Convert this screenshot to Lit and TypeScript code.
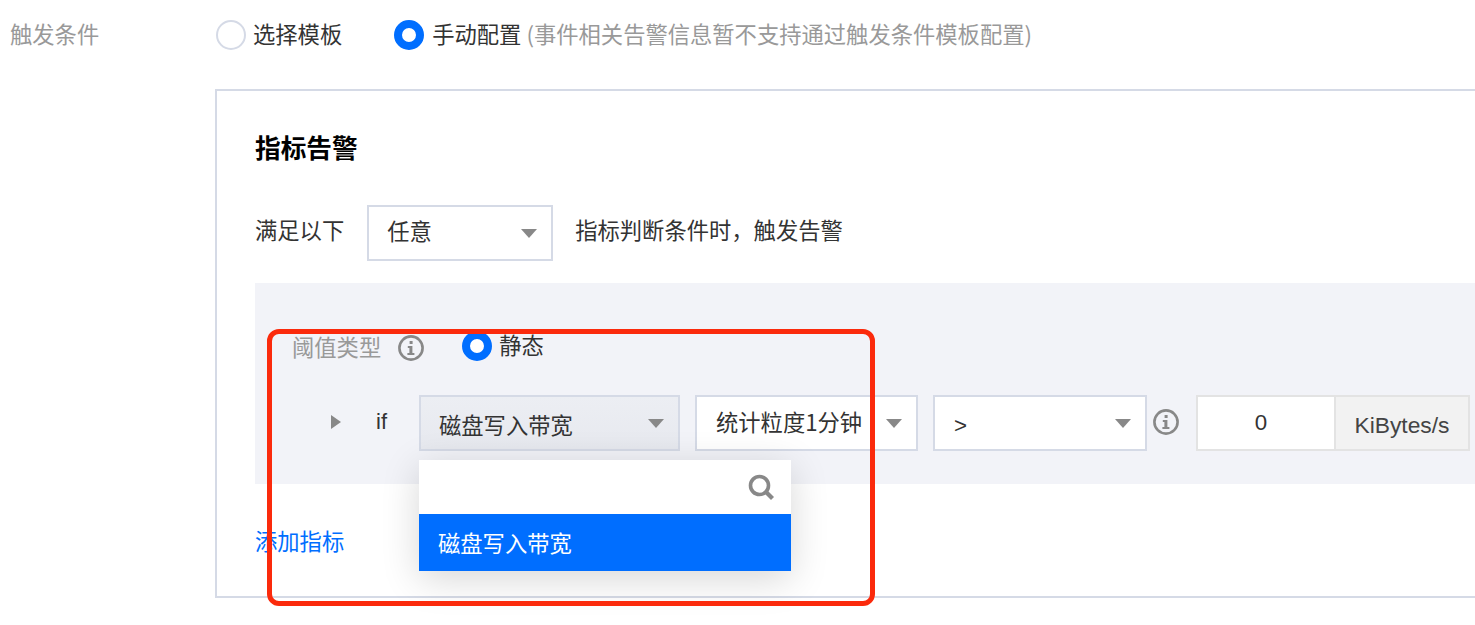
import { LitElement, html, css, svg } from 'lit';
import { customElement } from 'lit/decorators.js';

const infoIcon = svg`<svg class="info" viewBox="0 0 28 28" width="28" height="28">
  <circle cx="14" cy="14" r="11.6" fill="none" stroke="#888" stroke-width="2.6"/>
  <rect x="12.6" y="7" width="3" height="3" fill="#888"/>
  <path d="M10.8 12h4.6v7h2v2h-7v-2h2v-5h-1.600z" fill="#888"/>
</svg>`;

const searchIcon = svg`<svg viewBox="0 0 28 28" width="28" height="28">
  <circle cx="12.500" cy="12.500" r="9" fill="none" stroke="#888" stroke-width="3.600"/>
  <path d="M19 19l6.500 6.500" stroke="#888" stroke-width="4.200" fill="none"/>
</svg>`;

@customElement('app-root')
export class AppRoot extends LitElement {
  static styles = css`
    :host {
      display: block;
      position: relative;
      width: 1475px;
      height: 625px;
      overflow: hidden;
      background: #fff;
      color: #333;
      font-family: "Noto Sans CJK SC", "Liberation Sans", sans-serif;
      font-size: 22.300px;
      line-height: 30px;
    }
    .t {
      padding-bottom: 4px;
    }
    .top {
      display: flex;
      align-items: center;
      height: 30px;
      padding: 20px 0 0 10px;
    }
    .label {
      width: 206px;
      flex: none;
      color: #999;
    }
    .radio {
      box-sizing: border-box;
      width: 30px;
      height: 30px;
      flex: none;
      border-radius: 50%;
      border: 2px solid #d5dae6;
      background: #fff;
      margin-right: 7px;
    }
    .radio.on {
      border: 8px solid #006eff;
    }
    .second {
      margin: 0 8px 0 52px;
    }
    .hint {
      color: #999;
      margin-left: 5px;
    }
    .panel {
      box-sizing: border-box;
      width: 1400px;
      height: 509px;
      margin: 39px 0 0 215px;
      border: 2px solid #d5dae6;
      padding: 0 0 0 38px;
    }
    h2 {
      margin: 39px 0 0;
      font-size: 25.700px;
      line-height: 34px;
      font-weight: 700;
      color: #000;
    }
    .match {
      display: flex;
      align-items: center;
      height: 56px;
      margin-top: 41px;
    }
    .match > .t {
      padding-bottom: 8px;
    }
    .select {
      box-sizing: border-box;
      display: flex;
      align-items: center;
      justify-content: space-between;
      height: 56px;
      flex: none;
      border: 2px solid #d5dae6;
      background: #fff;
      padding: 0 14px 0 19px;
      white-space: nowrap;
    }
    .select span {
      padding-top: 2px;
    }
    .arrow {
      width: 0;
      height: 0;
      flex: none;
      border-left: 8px solid transparent;
      border-right: 8px solid transparent;
      border-top: 9px solid #888;
    }
    .any {
      width: 186px;
      margin: 0 22px 0 23px;
      padding-left: 18px;
    }
    .select.any span {
      padding: 0 0 6px;
    }
    .box {
      width: 1300px;
      height: 201px;
      margin-top: 22px;
      background: #f2f3f8;
      box-sizing: border-box;
      padding: 48px 0 0 38px;
    }
    .threshold {
      display: flex;
      align-items: center;
      height: 30px;
    }
    .threshold .name {
      color: #999;
      margin: 0 16px 0 -1px;
    }
    .threshold .info {
      margin: 4px 0 0;
    }
    .threshold .radio {
      margin: 0 7px 0 37px;
    }
    .rule {
      display: flex;
      align-items: center;
      height: 56px;
      margin-top: 34px;
    }
    .rule .info {
      margin-bottom: 2px;
    }
    .caret {
      width: 0;
      height: 0;
      flex: none;
      margin: 0 0 2px 38px;
      border-top: 7.500px solid transparent;
      border-bottom: 7.500px solid transparent;
      border-left: 10px solid #888;
    }
    .if {
      width: 43px;
      margin-left: 35px;
      padding-bottom: 2px;
      font-family: "Liberation Sans", sans-serif;
      font-size: 22px;
    }
    .metric {
      width: 261px;
      padding-left: 18px;
      background: linear-gradient(#eceef3, #e7e9ef);
      margin-right: 15px;
    }
    .period {
      width: 223px;
      margin-right: 15px;
    }
    .select.period span {
      padding: 0 0 4px;
    }
    .op {
      width: 214px;
      margin-right: 5px;
    }
    .select.op span {
      padding-top: 6px;
      font-family: "Liberation Sans", sans-serif;
    }
    .info {
      flex: none;
      margin-right: 16px;
    }
    .group {
      display: flex;
      height: 56px;
      box-sizing: border-box;
      border: 2px solid #e3e3e3;
      font-family: "Liberation Sans", sans-serif;
    }
    .value {
      box-sizing: border-box;
      width: 138px;
      padding-right: 10px;
      background: #fff;
      display: flex;
      align-items: center;
      justify-content: center;
      border-right: 2px solid #e3e3e3;
    }
    .unit {
      width: 132px;
      background: #f2f2f2;
      display: flex;
      align-items: center;
      justify-content: center;
      color: #444;
      font-size: 22.800px;
      padding-top: 4px;
      box-sizing: border-box;
    }
    .add {
      margin-top: 41px;
      color: #006eff;
    }
    .dropdown {
      position: absolute;
      left: 419px;
      top: 460px;
      width: 372px;
      background: #fff;
      box-shadow: 0 8px 36px rgba(0, 0, 0, 0.16);
    }
    .search {
      display: flex;
      justify-content: flex-end;
      align-items: center;
      height: 54px;
      padding-right: 16px;
    }
    .option {
      box-sizing: border-box;
      height: 57px;
      display: flex;
      align-items: center;
      padding: 0 0 2px 19px;
      background: #006eff;
      color: #fff;
    }
    .mark {
      position: absolute;
      left: 267px;
      top: 329px;
      width: 608px;
      height: 277px;
      box-sizing: border-box;
      border: 5px solid #fb2a0c;
      border-radius: 12px;
      pointer-events: none;
    }
  `;

  render() {
    return html`
      <div class="top">
        <div class="label t">触发条件</div>
        <div class="radio"></div>
        <div class="t">选择模板</div>
        <div class="radio on second"></div>
        <div class="t">手动配置</div>
        <div class="hint t">(事件相关告警信息暂不支持通过触发条件模板配置)</div>
      </div>
      <div class="panel">
        <h2>指标告警</h2>
        <div class="match">
          <div class="t">满足以下</div>
          <div class="select any"><span>任意</span><i class="arrow"></i></div>
          <div class="t">指标判断条件时&#xFF0C;触发告警</div>
        </div>
        <div class="box">
          <div class="threshold">
            <div class="name">阈值类型</div>
            ${infoIcon}
            <div class="radio on"></div>
            <div class="t">静态</div>
          </div>
          <div class="rule">
            <i class="caret"></i>
            <div class="if">if</div>
            <div class="select metric"><span>磁盘写入带宽</span><i class="arrow"></i></div>
            <div class="select period"><span>统计粒度1分钟</span><i class="arrow"></i></div>
            <div class="select op"><span>&gt;</span><i class="arrow"></i></div>
            ${infoIcon}
            <div class="group">
              <div class="value">0</div>
              <div class="unit">KiBytes/s</div>
            </div>
          </div>
        </div>
        <div class="add">添加指标</div>
      </div>
      <div class="dropdown">
        <div class="search">${searchIcon}</div>
        <div class="option">磁盘写入带宽</div>
      </div>
      <div class="mark"></div>
    `;
  }
}
